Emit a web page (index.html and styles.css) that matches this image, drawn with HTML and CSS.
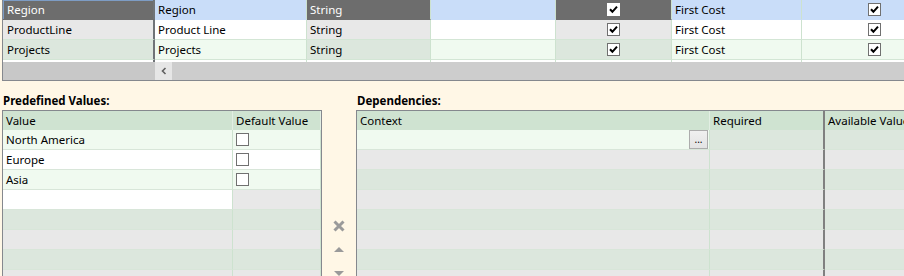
FILE: index.html
```html
<!DOCTYPE html>
<html lang="en">
    <head>
        <meta charset="UTF-8" />
        <title>Attributes</title>
        <link rel="stylesheet" href="styles.css">
    </head>
    <body>
        <!-- Attribute grid -->
        <div class="attr-grid">
            <div class="trow sel">
                <div class="c c0 ro focus">Region</div>
                <div class="c c1">Region</div>
                <div class="c c2 ro">String</div>
                <div class="c c3"></div>
                <div class="c c4 ro center"><span class="chk on inv"><svg viewBox="0 0 11 11"><path d="M2 5.2 L4.4 7.8 L9 2.6" /></svg></span></div>
                <div class="c c5">First Cost</div>
                <div class="c c6 center"><span class="chk on"><svg viewBox="0 0 11 11"><path d="M2 5.2 L4.4 7.8 L9 2.6" /></svg></span></div>
            </div>
            <div class="trow">
                <div class="c c0 ro">ProductLine</div>
                <div class="c c1">Product Line</div>
                <div class="c c2 ro">String</div>
                <div class="c c3"></div>
                <div class="c c4 ro center"><span class="chk on"><svg viewBox="0 0 11 11"><path d="M2 5.2 L4.4 7.8 L9 2.6" /></svg></span></div>
                <div class="c c5">First Cost</div>
                <div class="c c6 center"><span class="chk on"><svg viewBox="0 0 11 11"><path d="M2 5.2 L4.4 7.8 L9 2.6" /></svg></span></div>
            </div>
            <div class="trow alt">
                <div class="c c0 ro">Projects</div>
                <div class="c c1">Projects</div>
                <div class="c c2 ro">String</div>
                <div class="c c3"></div>
                <div class="c c4 ro center"><span class="chk on"><svg viewBox="0 0 11 11"><path d="M2 5.2 L4.4 7.8 L9 2.6" /></svg></span></div>
                <div class="c c5">First Cost</div>
                <div class="c c6 center"><span class="chk on"><svg viewBox="0 0 11 11"><path d="M2 5.2 L4.4 7.8 L9 2.6" /></svg></span></div>
            </div>
            <div class="trow stub">
                <div class="c c0"></div>
                <div class="c c1"></div>
                <div class="c c2"></div>
                <div class="c c3"></div>
                <div class="c c4"></div>
                <div class="c c5"></div>
                <div class="c c6"></div>
            </div>
            <div class="hscroll">
                <div class="hs-frozen"></div>
                <div class="hs-btn"><svg viewBox="0 0 6 8"><path d="M4.5 1 L1.5 4 L4.5 7" /></svg></div>
                <div class="hs-track"></div>
            </div>
        </div>

        <div class="lower">
            <!-- Predefined values -->
            <div class="panel values-panel">
                <div class="panel-title">Predefined Values:</div>
                <div class="sub-grid values-grid">
                    <div class="srow head">
                        <div class="sc">Value</div>
                        <div class="sc">Default Value</div>
                    </div>
                    <div class="srow g-light">
                        <div class="sc">North America</div>
                        <div class="sc"><span class="chk"></span></div>
                    </div>
                    <div class="srow g-white">
                        <div class="sc">Europe</div>
                        <div class="sc"><span class="chk"></span></div>
                    </div>
                    <div class="srow g-light">
                        <div class="sc">Asia</div>
                        <div class="sc"><span class="chk"></span></div>
                    </div>
                    <div class="srow new-row">
                        <div class="sc"></div>
                        <div class="sc"></div>
                    </div>
                    <div class="srow g-green"><div class="sc"></div><div class="sc"></div></div>
                    <div class="srow g-gray"><div class="sc"></div><div class="sc"></div></div>
                    <div class="srow g-green"><div class="sc"></div><div class="sc"></div></div>
                    <div class="srow g-gray"><div class="sc"></div><div class="sc"></div></div>
                </div>
            </div>

            <!-- Row actions -->
            <div class="actions">
                <svg class="act-del" viewBox="0 0 14 14"><path d="M2.5 2.5 L11.5 11.5 M11.5 2.5 L2.5 11.5" /></svg>
                <svg class="act-up" viewBox="0 0 10 5"><path d="M0 5 L5 0 L10 5 Z" /></svg>
                <svg class="act-down" viewBox="0 0 10 5"><path d="M0 0 L10 0 L5 5 Z" /></svg>
            </div>

            <!-- Dependencies -->
            <div class="panel deps-panel">
                <div class="panel-title">Dependencies:</div>
                <div class="sub-grid deps-grid">
                    <div class="srow head">
                        <div class="sc">Context</div>
                        <div class="sc">Required</div>
                        <div class="sc">Available Values</div>
                    </div>
                    <div class="srow first">
                        <div class="sc ctx"><span class="dots">...</span></div>
                        <div class="sc"></div>
                        <div class="sc"></div>
                    </div>
                    <div class="srow g-gray"><div class="sc"></div><div class="sc"></div><div class="sc"></div></div>
                    <div class="srow g-green"><div class="sc"></div><div class="sc"></div><div class="sc"></div></div>
                    <div class="srow g-gray"><div class="sc"></div><div class="sc"></div><div class="sc"></div></div>
                    <div class="srow g-green"><div class="sc"></div><div class="sc"></div><div class="sc"></div></div>
                    <div class="srow g-gray"><div class="sc"></div><div class="sc"></div><div class="sc"></div></div>
                    <div class="srow g-green"><div class="sc"></div><div class="sc"></div><div class="sc"></div></div>
                    <div class="srow g-gray"><div class="sc"></div><div class="sc"></div><div class="sc"></div></div>
                </div>
            </div>
        </div>
    </body>
</html>
```

FILE: styles.css
```css
body {
    margin: 0;
    height: 276px;
    overflow: hidden;
    background: #fff7e6;
    font-family: "Noto Sans", sans-serif;
    font-size: 11.5px;
    color: #000;
}

/* top attribute grid */
.attr-grid {
    margin-left: 2px;
    height: 80px;
    border-left: 1px solid #85888e;
    border-bottom: 1px solid #85888e;
    overflow: hidden;
    background: #fff;
}
.trow {
    display: grid;
    grid-template-columns: 152px 152px 124px 125px 116px 130px 150px;
    height: 20px;
}
.trow.stub {
    height: 2px;
}
.c {
    box-sizing: border-box;
    border-right: 1px solid #cde2cf;
    border-bottom: 1px solid #d3e6d5;
    padding: 1px 3px 0;
    line-height: 18px;
    white-space: nowrap;
    overflow: hidden;
    background: #fff;
}
.c0 {
    border-right: 2px solid #6f7377;
    padding-left: 4px;
}
.center {
    display: flex;
    align-items: center;
    justify-content: center;
    padding-top: 0;
}
.c6.center {
    justify-content: flex-start;
    padding-left: 66px;
}
.trow .ro {
    background: #e8e8e8;
}
.trow.alt .c {
    background: #f0faf0;
}
.trow.alt .ro {
    background: #dce7dd;
}
.trow.sel .c {
    background: #c9ddf9;
    border-bottom-color: #c9ddf9;
}
.trow.sel .ro {
    background: #6d6d6d;
    color: #fff;
    border-bottom-color: #6d6d6d;
}
.trow.sel .focus {
    box-shadow: inset 1px 1px 0 #7d9cc4;
}
.trow.stub .c {
    border-bottom: none;
}

.hscroll {
    display: flex;
    height: 18px;
    background: #cdcdcd;
}
.hs-frozen {
    width: 152px;
    background: #c8c8c8;
}
.hs-btn {
    width: 17px;
    background: #e6e6e6;
    display: flex;
    align-items: center;
    justify-content: center;
}
.hs-btn svg {
    width: 6px;
    height: 8px;
    fill: none;
    stroke: #606060;
    stroke-width: 1.6;
}
.hs-track {
    flex: 1;
}

/* checkboxes */
.chk {
    display: inline-block;
    box-sizing: border-box;
    width: 13px;
    height: 13px;
    border: 1px solid #707070;
    background: #fff;
}
.chk svg {
    display: block;
    width: 11px;
    height: 11px;
    fill: none;
    stroke: #000;
    stroke-width: 2;
}
.chk.inv {
    border-color: #fff;
}

/* lower panels */
.lower {
    display: flex;
    padding-left: 2px;
}
.panel-title {
    box-sizing: border-box;
    height: 29px;
    padding: 12px 0 0 1px;
    line-height: 15px;
    font-weight: bold;
    white-space: nowrap;
}
.values-panel {
    width: 320px;
}
.deps-panel {
    flex: 1;
    overflow: hidden;
}
.sub-grid {
    border: 1px solid #85888e;
    border-bottom: none;
    height: 200px;
    overflow: hidden;
}
.deps-grid {
    border-right: none;
}
.srow {
    display: grid;
    height: 20px;
}
.values-grid .srow {
    grid-template-columns: 230px 1fr;
}
.deps-grid .srow {
    grid-template-columns: 353px 115px 200px;
}
.sc {
    box-sizing: border-box;
    border-right: 1px solid #cde2cf;
    border-bottom: 1px solid #d8e6d9;
    padding: 1px 3px 0;
    line-height: 18px;
    white-space: nowrap;
    overflow: hidden;
}
.srow.head {
    height: 19px;
}
.srow.head .sc {
    background: #cfe3d1;
    border-bottom: none;
    border-right-color: #e2eee3;
}
.deps-grid .srow .sc:nth-child(2) {
    border-right: 2px solid #808080;
}
.g-light .sc {
    background: #f0faf0;
}
.g-white .sc {
    background: #fff;
}
.g-green .sc {
    background: #dce7dd;
}
.g-gray .sc {
    background: #e8e8e8;
}
.new-row .sc {
    background: #fff;
}
.new-row .sc + .sc {
    background: #e8e8e8;
}
.values-grid .sc + .sc {
    display: flex;
    align-items: center;
    padding-top: 0;
}
.values-grid .head .sc + .sc {
    display: block;
    padding-top: 1px;
}
.srow.first .sc {
    background: #dce7dd;
}
.srow.first .ctx {
    background: #f0faf0;
    display: flex;
    justify-content: flex-end;
    align-items: flex-start;
    padding: 0 1px 0 0;
}
.dots {
    box-sizing: border-box;
    width: 19px;
    height: 19px;
    border: 1px solid #acacac;
    background: linear-gradient(#f0f0f0, #e3e3e3);
    font-size: 10px;
    line-height: 17px;
    text-align: center;
    color: #000;
}

/* row actions */
.actions {
    width: 34px;
    display: flex;
    flex-direction: column;
    align-items: center;
    padding-top: 138px;
}
.act-del {
    width: 14px;
    height: 14px;
    fill: none;
    stroke: #9a9a9a;
    stroke-width: 3;
}
.act-up,
.act-down {
    width: 10px;
    height: 5px;
    fill: #9a9a9a;
}
.act-up {
    margin-top: 14px;
}
.act-down {
    margin-top: 19px;
}
```
